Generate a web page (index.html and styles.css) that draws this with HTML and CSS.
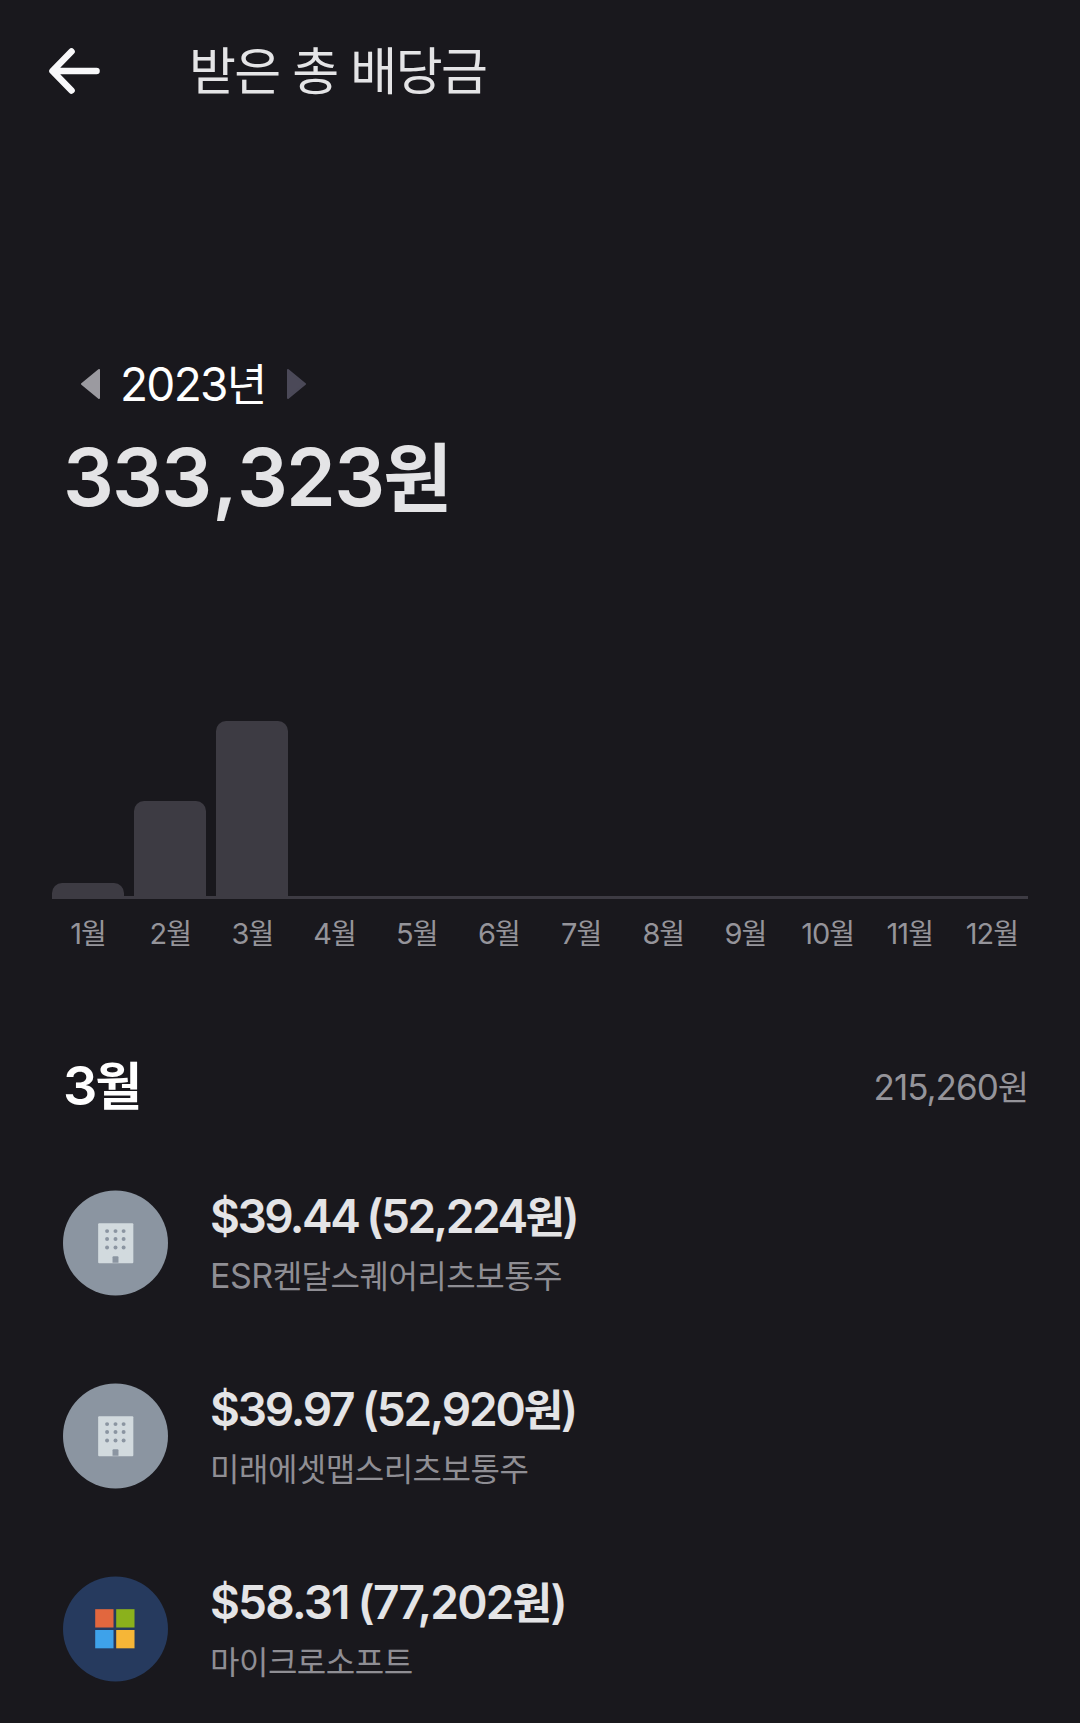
FILE: index.html
```html
<!DOCTYPE html>
<html lang="ko">
<head>
  <meta charset="UTF-8" />
  <title>받은 총 배당금</title>
  <link rel="stylesheet" href="styles.css">
</head>
<body>

  <!-- Header -->
  <header class="header">
    <svg class="back" width="52" height="48" viewBox="0 0 52 48">
      <path d="M23.5 4.5 L4.5 24 L23.5 43.5 M5 24 H48.5" />
    </svg>
    <h1 class="title">받은 총 배당금</h1>
  </header>

  <!-- Year total -->
  <section class="summary">
    <div class="year">
      <svg width="20" height="32" viewBox="0 0 20 32"><path class="prev" d="M19 2 V30 L2 16 Z" /></svg>
      <span class="year-text">2023<span class="ko">년</span></span>
      <svg width="20" height="32" viewBox="0 0 20 32"><path class="next" d="M2 2 V30 L19 16 Z" /></svg>
    </div>
    <div class="total">333<span class="comma">,</span>323<span class="ko">원</span></div>
  </section>

  <!-- Chart -->
  <section class="chart">
    <div class="bars">
      <div class="bar" style="height: 15px"></div>
      <div class="bar" style="height: 97px"></div>
      <div class="bar" style="height: 177px"></div>
    </div>
    <div class="months">
      <span>1<span class="ko">월</span></span>
      <span>2<span class="ko">월</span></span>
      <span>3<span class="ko">월</span></span>
      <span>4<span class="ko">월</span></span>
      <span>5<span class="ko">월</span></span>
      <span>6<span class="ko">월</span></span>
      <span>7<span class="ko">월</span></span>
      <span>8<span class="ko">월</span></span>
      <span>9<span class="ko">월</span></span>
      <span>10<span class="ko">월</span></span>
      <span>11<span class="ko">월</span></span>
      <span>12<span class="ko">월</span></span>
    </div>
  </section>

  <!-- Month list -->
  <section class="month">
    <div class="month-head">
      <h2 class="month-name">3<span class="ko">월</span></h2>
      <span class="month-sum">215,260<span class="ko">원</span></span>
    </div>

    <ul class="list">
      <li class="item">
        <svg class="logo" viewBox="0 0 106 106">
          <circle cx="53" cy="53" r="53" fill="#8b95a1" />
          <rect x="35.5" y="33" width="35.5" height="40.5" rx="1" fill="#d2dade" />
          <g fill="#8b95a1">
            <circle cx="44.5" cy="41" r="2" /><circle cx="53" cy="41" r="2" /><circle cx="61.2" cy="41" r="2" />
            <circle cx="44.5" cy="49" r="2" /><circle cx="53" cy="49" r="2" /><circle cx="61.2" cy="49" r="2" />
            <circle cx="44.5" cy="57.5" r="2" /><circle cx="53" cy="57.5" r="2" /><circle cx="61.2" cy="57.5" r="2" />
            <path d="M50 73 V67.5 Q50 66.5 51 66.5 H55 Q56 66.5 56 67.5 V73 Z" />
          </g>
        </svg>
        <div class="info">
          <div class="amount">$39.44 (52,224<span class="ko">원</span>)</div>
          <div class="name">ESR<span class="ko">켄달스퀘어리츠보통주</span></div>
        </div>
      </li>
      <li class="item">
        <svg class="logo" viewBox="0 0 106 106">
          <circle cx="53" cy="53" r="53" fill="#8b95a1" />
          <rect x="35.5" y="33" width="35.5" height="40.5" rx="1" fill="#d2dade" />
          <g fill="#8b95a1">
            <circle cx="44.5" cy="41" r="2" /><circle cx="53" cy="41" r="2" /><circle cx="61.2" cy="41" r="2" />
            <circle cx="44.5" cy="49" r="2" /><circle cx="53" cy="49" r="2" /><circle cx="61.2" cy="49" r="2" />
            <circle cx="44.5" cy="57.5" r="2" /><circle cx="53" cy="57.5" r="2" /><circle cx="61.2" cy="57.5" r="2" />
            <path d="M50 73 V67.5 Q50 66.5 51 66.5 H55 Q56 66.5 56 67.5 V73 Z" />
          </g>
        </svg>
        <div class="info">
          <div class="amount medium">$39.97 (52,920<span class="ko">원</span>)</div>
          <div class="name"><span class="ko">미래에셋맵스리츠보통주</span></div>
        </div>
      </li>
      <li class="item">
        <svg class="logo" viewBox="0 0 106 106">
          <circle cx="53" cy="53" r="53" fill="#263a5e" />
          <rect x="32.5" y="33" width="18.5" height="18.5" fill="#e2673e" />
          <rect x="53.7" y="33" width="18.5" height="18.5" fill="#8bb11c" />
          <rect x="32.5" y="54" width="18.5" height="18.5" fill="#3ea2ea" />
          <rect x="53.7" y="54" width="18.5" height="18.5" fill="#f6b637" />
        </svg>
        <div class="info">
          <div class="amount loose">$58.31 (77,202<span class="ko">원</span>)</div>
          <div class="name"><span class="ko">마이크로소프트</span></div>
        </div>
      </li>
    </ul>
  </section>

</body>
</html>
```

FILE: styles.css
```css
* {
  box-sizing: border-box;
}

body {
  margin: 0;
  height: 1723px;
  overflow: hidden;
  background: #19181d;
  color: #e4e4e6;
  font-family: Inter, "Noto Sans CJK KR", sans-serif;
  white-space: nowrap;
}

h1, h2, ul {
  margin: 0;
  padding: 0;
}

.ko {
  font-family: "Noto Sans CJK KR", sans-serif;
}

.header {
  display: flex;
  align-items: center;
  height: 142px;
  padding-left: 48px;
}

.back {
  fill: none;
  stroke: #f8f8fa;
  stroke-width: 6.6;
  stroke-linecap: round;
  stroke-linejoin: round;
}

.title {
  margin-left: 89px;
  padding-bottom: 6px;
  font-family: "Noto Sans CJK KR", sans-serif;
  font-size: 51px;
  font-weight: 400;
  letter-spacing: -1.6px;
}

.summary {
  padding-top: 212px;
}

.year {
  display: flex;
  align-items: center;
  height: 60px;
  padding-left: 80px;
}

.year path {
  stroke-width: 2;
  stroke-linejoin: round;
}

.prev {
  fill: #9b9aa0;
  stroke: #9b9aa0;
}

.next {
  fill: #4b4958;
  stroke: #4b4958;
}

.year-text {
  width: 145px;
  margin: 0 21px 2px 20px;
  color: #fff;
  font-size: 46px;
  line-height: 58px;
  letter-spacing: -1.7px;
}

.year-text .ko {
  font-size: 44px;
}

.total {
  height: 110px;
  padding-left: 63px;
  font-size: 80px;
  font-weight: 600;
  line-height: 120px;
  letter-spacing: -1.8px;
}

.total .comma {
  margin: 0 1px 0 2px;
}

.total .ko {
  font-size: 75px;
  font-weight: 700;
}

.chart {
  width: 976px;
  margin: 177px 0 0 52px;
}

.bars {
  display: grid;
  grid-template-columns: repeat(12, 1fr);
  gap: 10px;
  align-items: end;
  height: 198px;
  border-bottom: 3px solid #3d3b43;
}

.bar {
  background: #3d3b43;
  border-radius: 10px 10px 0 0;
  margin-bottom: -2px;
}

.months {
  display: grid;
  grid-template-columns: repeat(12, 1fr);
  gap: 10px;
  height: 70px;
  color: #95949a;
  font-size: 29px;
  line-height: 67px;
  letter-spacing: -1px;
  text-align: center;
}

.months .ko {
  font-size: 28px;
}

.month {
  padding: 0 52px 0 63px;
}

.month-head {
  display: flex;
  justify-content: space-between;
  height: 80px;
  margin-top: 79px;
  line-height: 80px;
}

.month-name {
  margin-top: -5px;
  color: #fff;
  font-size: 54px;
  font-weight: 600;
  letter-spacing: -2px;
}

.month-name .ko {
  font-size: 51px;
  font-weight: 700;
}

.month-sum {
  margin-top: -2px;
  color: #95949a;
  font-size: 35px;
  font-weight: 400;
  letter-spacing: -1px;
}

.month-sum .ko {
  font-size: 34px;
}

.list {
  list-style: none;
  padding-top: 62px;
}

.item {
  display: flex;
  height: 193px;
}

.logo {
  width: 105px;
  height: 106px;
}

.info {
  margin-left: 42px;
}

.amount {
  height: 52px;
  font-size: 46px;
  font-weight: 600;
  line-height: 48px;
  letter-spacing: -2.5px;
  word-spacing: -1px;
}

.amount.medium {
  letter-spacing: -2.2px;
}

.amount.loose {
  letter-spacing: -1.8px;
}

.amount .ko {
  font-size: 43px;
  font-weight: 700;
}

.name {
  height: 50px;
  margin-top: 8px;
  color: #8f8e94;
  font-size: 34px;
  font-weight: 400;
  line-height: 48px;
  letter-spacing: -0.5px;
}

.name .ko {
  font-size: 32px;
}
```
